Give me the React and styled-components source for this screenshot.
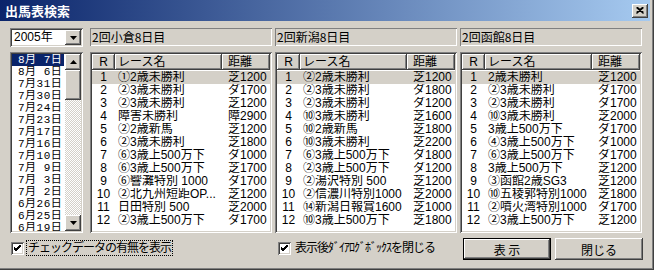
import React from 'react';
import styled, { createGlobalStyle } from 'styled-components';

const GlobalStyle = createGlobalStyle`
  html, body {
    margin: 0;
    padding: 0;
    background: #d4d0c8;
  }
  body {
    width: 654px;
    height: 270px;
    overflow: hidden;
  }
`;

const UI = `"Liberation Sans", "Noto Sans CJK JP", sans-serif`;
const raised = `box-shadow: inset -1px -1px #404040, inset 1px 1px #ffffff, inset -2px -2px #808080, inset 2px 2px #d4d0c8;`;
const sunken = `box-shadow: inset 1px 1px #808080, inset -1px -1px #ffffff, inset 2px 2px #404040, inset -2px -2px #d4d0c8;`;

const Window = styled.div`
  width: 654px;
  height: 270px;
  box-sizing: border-box;
  padding: 0 4px 4px 0;
  background: #d4d0c8;
  box-shadow: inset -1px -1px #404040, inset -2px -2px #808080;
  display: flex;
  flex-direction: column;
  font-family: ${UI};
  font-size: 12px;
  color: #000;
`;

const TitleBar = styled.div`
  height: 21px;
  flex: none;
  display: flex;
  align-items: center;
  padding: 0 2px 0 5px;
  background: linear-gradient(to right, #0a246a, #a6caf0);
`;

const Title = styled.span`
  color: #fff;
  font-family: "Noto Sans CJK JP", sans-serif;
  font-weight: bold;
  font-size: 13px;
  line-height: 21px;
`;

const CloseButton = styled.div`
  margin-left: auto;
  width: 16px;
  height: 14px;
  background: #d4d0c8;
  ${raised}
  display: flex;
  align-items: center;
  justify-content: center;
`;

const Main = styled.div`
  display: flex;
  gap: 7px;
  padding: 7px 0 0 10px;
`;

const LeftCol = styled.div`
  width: 73px;
  display: flex;
  flex-direction: column;
  gap: 5px;
`;

const Combo = styled.div`
  height: 19px;
  box-sizing: border-box;
  padding: 2px;
  background: #fff;
  ${sunken}
  display: flex;
`;

const ComboText = styled.span`
  flex: 1;
  line-height: 15px;
  padding-left: 2px;
`;

const ArrowButton = styled.div`
  width: 16px;
  height: ${p => p.$h || 16}px;
  flex: none;
  background: #d4d0c8;
  ${raised}
  display: flex;
  align-items: center;
  justify-content: center;
`;

const DateList = styled.div`
  height: 181px;
  box-sizing: border-box;
  padding: 2px;
  background: #fff;
  ${sunken}
  display: flex;
`;

const DateItems = styled.div`
  flex: 1;
  overflow: hidden;
`;

const DateItem = styled.div`
  height: 12px;
  line-height: 12px;
  padding-left: 6px;
  margin-right: 1px;
  font-family: "Liberation Mono", "Noto Sans CJK JP", monospace;
  font-size: 11px;
  letter-spacing: 0.5px;
  white-space: pre;
  overflow: hidden;
  background: ${p => (p.$selected ? '#0a246a' : 'transparent')};
  color: ${p => (p.$selected ? '#fff' : '#000')};
`;

const ScrollBar = styled.div`
  width: 16px;
  display: flex;
  flex-direction: column;
`;

const Thumb = styled.div`
  height: 30px;
  background: #d4d0c8;
  ${raised}
`;

const Track = styled.div`
  flex: 1;
  background: repeating-conic-gradient(#ffffff 0 25%, #d4d0c8 0 50%) 0 0 / 2px 2px;
`;

const Panels = styled.div`
  display: grid;
  grid-template-columns: repeat(3, 182px);
  column-gap: 3px;
`;

const Panel = styled.div`
  display: flex;
  flex-direction: column;
  gap: 6px;
`;

const PanelTitle = styled.div`
  height: 18px;
  box-sizing: border-box;
  padding-left: 2px;
  line-height: 18px;
  box-shadow: inset 1px 1px #808080, inset -1px -1px #ffffff;
  font-family: "Noto Sans CJK JP", sans-serif;
`;

const ListView = styled.div`
  height: 181px;
  box-sizing: border-box;
  padding: 2px;
  background: #fff;
  ${sunken}
  overflow: hidden;
`;

const Columns = `
  display: grid;
  grid-template-columns: 23px 107px 1fr;
`;

const HeaderRow = styled.div`
  ${Columns}
  height: 16px;
  margin-bottom: 1px;
`;

const HeaderCell = styled.div`
  background: #d4d0c8;
  ${raised}
  line-height: 16px;
  padding-left: ${p => p.$pad || 0}px;
  text-align: ${p => p.$align || 'left'};
  white-space: nowrap;
  overflow: hidden;
`;

const Row = styled.div`
  ${Columns}
  height: 13px;
  line-height: 13px;
  background: ${p => (p.$selected ? '#d4d0c8' : 'transparent')};
  white-space: nowrap;
`;

const Cell = styled.div`
  padding-left: ${p => p.$pad || 0}px;
  text-align: ${p => p.$align || 'left'};
  overflow: hidden;
`;

const Footer = styled.div`
  display: flex;
  align-items: flex-start;
  padding: 5px 7px 0 11px;
`;

const CheckItem = styled.div`
  display: flex;
  align-items: center;
  width: ${p => (p.$width ? `${p.$width}px` : 'auto')};
  flex: ${p => (p.$width ? 'none' : 1)};
  margin-top: 3px;
`;

const CheckBox = styled.div`
  width: 13px;
  height: 13px;
  flex: none;
  box-sizing: border-box;
  background: #fff;
  ${sunken}
  display: flex;
  align-items: center;
  justify-content: center;
`;

const CheckLabel = styled.span`
  margin-left: 3px;
  padding: 0 1px;
  line-height: 14px;
  letter-spacing: -1px;
  outline: ${p => (p.$focused ? '1px dotted #000' : 'none')};
`;

const Buttons = styled.div`
  display: flex;
  gap: 4px;
`;

const Button = styled.div`
  width: 88px;
  height: 22px;
  box-sizing: border-box;
  background: #d4d0c8;
  ${raised}
  border: ${p => (p.$default ? '1px solid #000' : 'none')};
  display: flex;
  align-items: center;
  justify-content: center;
  font-family: "Noto Sans CJK JP", sans-serif;
  white-space: pre;
`;

const Tri = ({ up }) => (
  <svg width="7" height="4" viewBox="0 0 7 4">
    <path d={up ? 'M3.5 0 L7 4 L0 4 Z' : 'M0 0 L7 0 L3.5 4 Z'} fill="#000" />
  </svg>
);

const Check = () => (
  <svg width="7" height="7" viewBox="0 0 7 7">
    <path d="M0 2 L2 4 L7 -1 M0 3 L2 5 L7 0 M0 4 L2 6 L7 1" stroke="#000" strokeWidth="1" fill="none" />
  </svg>
);

const dates = ['8月 7日', '8月 6日', '7月31日', '7月30日', '7月24日', '7月23日', '7月17日', '7月16日',
  '7月10日', '7月 9日', '7月 3日', '7月 2日', '6月26日', '6月25日', '6月19日'];

const meetings = [
  {
    title: '2回小倉8日目',
    races: [
      ['①2歳未勝利', '芝1200'], ['②3歳未勝利', 'ダ1700'], ['②3歳未勝利', '芝1200'],
      ['障害未勝利', '障2900'], ['②2歳新馬', '芝1200'], ['②3歳未勝利', '芝1800'],
      ['⑥3歳上500万下', 'ダ1000'], ['⑥3歳上500万下', '芝1700'], ['⑥響灘特別 1000', 'ダ1700'],
      ['②北九州短距OP...', '芝1200'], ['日田特別 500', '芝2000'], ['②3歳上500万下', 'ダ1700'],
    ],
  },
  {
    title: '2回新潟8日目',
    races: [
      ['②2歳未勝利', '芝1200'], ['②3歳未勝利', 'ダ1800'], ['②3歳未勝利', 'ダ1200'],
      ['⑩3歳未勝利', '芝1600'], ['⑩2歳新馬', '芝1800'], ['⑩3歳未勝利', '芝2200'],
      ['⑥3歳上500万下', 'ダ1800'], ['②3歳上500万下', 'ダ1200'], ['②湯沢特別  500', '芝1200'],
      ['②信濃川特別1000', '芝2000'], ['⑭新潟日報賞1600', '芝1000'], ['⑩3歳上500万下', '芝1800'],
    ],
  },
  {
    title: '2回函館8日目',
    races: [
      ['2歳未勝利', '芝1200'], ['②3歳未勝利', 'ダ1700'], ['②3歳未勝利', 'ダ1700'],
      ['⑩3歳未勝利', '芝2000'], ['3歳上500万下', 'ダ1700'], ['④3歳上500万下', 'ダ1000'],
      ['⑥3歳上500万下', 'ダ1700'], ['3歳上500万下', '芝1200'], ['③函館2歳SG3', '芝1200'],
      ['⑩五稜郭特別1000', '芝1800'], ['②噴火湾特別1000', 'ダ1700'], ['②3歳上500万下', '芝1200'],
    ],
  },
];

const App = () => (
  <Window>
    <GlobalStyle />
    <TitleBar>
      <Title>出馬表検索</Title>
      <CloseButton>
        <svg width="8" height="7" viewBox="0 0 8 7">
          <path d="M0.5 0.5 L7.5 6.5 M7.5 0.5 L0.5 6.5 M1.5 0.5 L7.5 5.5 M6.5 0.5 L0.5 5.5" stroke="#000" strokeWidth="1.2" />
        </svg>
      </CloseButton>
    </TitleBar>
    <Main>
      <LeftCol>
        <Combo>
          <ComboText>2005年</ComboText>
          <ArrowButton $h={15}><Tri /></ArrowButton>
        </Combo>
        <DateList>
          <DateItems>
            {dates.map((d, i) => (
              <DateItem key={d} $selected={i === 0}>{d}</DateItem>
            ))}
          </DateItems>
          <ScrollBar>
            <ArrowButton><Tri up /></ArrowButton>
            <Thumb />
            <Track />
            <ArrowButton><Tri /></ArrowButton>
          </ScrollBar>
        </DateList>
      </LeftCol>
      <Panels>
        {meetings.map(m => (
          <Panel key={m.title}>
            <PanelTitle>{m.title}</PanelTitle>
            <ListView>
              <HeaderRow>
                <HeaderCell $align="center">R</HeaderCell>
                <HeaderCell $pad={3}>レース名</HeaderCell>
                <HeaderCell $pad={6}>距離</HeaderCell>
              </HeaderRow>
              {m.races.map(([name, dist], i) => (
                <Row key={i} $selected={i === 0}>
                  <Cell $align="center">{i + 1}</Cell>
                  <Cell $pad={3}>{name}</Cell>
                  <Cell $pad={6}>{dist}</Cell>
                </Row>
              ))}
            </ListView>
          </Panel>
        ))}
      </Panels>
    </Main>
    <Footer>
      <CheckItem $width={267}>
        <CheckBox><Check /></CheckBox>
        <CheckLabel $focused>チェックデータの有無を表示</CheckLabel>
      </CheckItem>
      <CheckItem>
        <CheckBox><Check /></CheckBox>
        <CheckLabel>表示後ﾀﾞｲｱﾛｸﾞﾎﾞｯｸｽを閉じる</CheckLabel>
      </CheckItem>
      <Buttons>
        <Button $default>表 示</Button>
        <Button>閉じる</Button>
      </Buttons>
    </Footer>
  </Window>
);

export default App;
